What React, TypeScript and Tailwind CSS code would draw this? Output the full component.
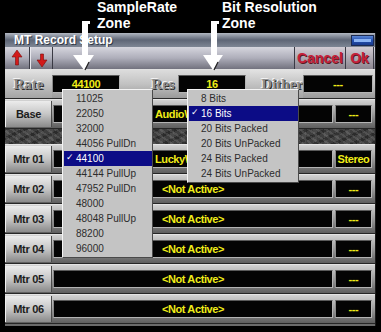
import React from "react";

const rates = [
  "11025",
  "22050",
  "32000",
  "44056 PullDn",
  "44100",
  "44144 PullUp",
  "47952 PullDn",
  "48000",
  "48048 PullUp",
  "88200",
  "96000",
];
const bits = [
  "8 Bits",
  "16 Bits",
  "20 Bits Packed",
  "20 Bits UnPacked",
  "24 Bits Packed",
  "24 Bits UnPacked",
];

function Field({
  children,
  className = "",
}: {
  children?: React.ReactNode;
  className?: string;
}) {
  return (
    <div
      className={`flex items-center justify-center overflow-hidden whitespace-nowrap bg-[#040404] border border-[#b4b4b4] border-t-[#5a5a5a] border-l-[#8a8a8a] text-[#f0ec18] font-bold text-[11px] tracking-[-0.4px] leading-none ${className}`}
    >
      {children}
    </div>
  );
}

function RowButton({ label }: { label: string }) {
  return (
    <div className="my-[1px] flex w-[47px] items-center justify-center border-r border-r-[#4a4a4a] border-l border-l-[#f0f0f0] bg-gradient-to-b from-[#ececec] via-[#c6c6c6] to-[#8a8a8a] text-[11px] font-bold tracking-[-0.3px] text-[#1c1c1c]">
      {label}
    </div>
  );
}

function TrackRow({
  label,
  text,
  right,
  left = false,
}: {
  label: string;
  text: string;
  right: string;
  left?: boolean;
}) {
  return (
    <div className="flex h-[30px] border-t border-t-[#e4e4e4] border-b border-b-[#262626] bg-gradient-to-b from-[#d2d2d2] via-[#9c9c9c] to-[#5e5e5e]">
      <RowButton label={label} />
      <div className="flex flex-1 items-center pl-[1px]">
        <Field
          className={`h-[18px] w-[280px] ${left ? "justify-start pl-[101px]" : ""}`}
        >
          {left ? (
            <span className="inline-block w-[32px] overflow-hidden whitespace-nowrap">{text}</span>
          ) : (
            text
          )}
        </Field>
        <Field className="ml-[2px] h-[18px] w-[37px]">{right}</Field>
      </div>
    </div>
  );
}

function Emboss({ children, className = "" }: { children: React.ReactNode; className?: string }) {
  return (
    <div
      className={`flex items-center font-['Liberation_Serif',serif] text-[15px] font-bold text-[#8e8e8e] [text-shadow:1px_1px_0_#2e2e2e,-1px_-1px_0_#f4f4f4] ${className}`}
    >
      {children}
    </div>
  );
}

function Menu({
  items,
  selected,
  className,
}: {
  items: string[];
  selected: number;
  className: string;
}) {
  return (
    <div
      className={`absolute flex flex-col border border-t-[#f4f4f4] border-l-[#f4f4f4] border-b-[#4a4a4a] border-r-[#4a4a4a] bg-[#c4c4c4] py-[1px] pl-[1px] ${className}`}
    >
      {items.map((it, i) => (
        <div
          key={it}
          className={`relative flex h-[15px] items-center pl-[12px] text-[10px] leading-none ${
            i === selected ? "bg-[#0c0c86] text-white" : "text-[#2c2c2c]"
          }`}
        >
          {i === selected && (
            <span className="absolute left-[2px] top-[2px] font-['DejaVu_Sans',sans-serif] text-[9px] font-bold">
              ✓
            </span>
          )}
          {it}
        </div>
      ))}
    </div>
  );
}

export default function App() {
  return (
    <div className="relative h-[332px] w-[381px] overflow-hidden bg-black font-['Liberation_Sans',Arial,sans-serif]">
      {/* window */}
      <div className="ml-[5px] mt-[33px] flex w-[371px] flex-col border-r border-r-[#1a1a1a] bg-[#8a8a8a]">
        {/* title bar */}
        <div className="flex h-[14px] items-start justify-between bg-gradient-to-b from-[#b2b8c2] via-[#5e6676] to-[#7e8694]">
          <div className="pl-[9px] text-[12px] font-bold leading-[14px] text-white [text-shadow:1px_1px_0_#333a48]">
            MT Record Setup
          </div>
          <div className="mr-[1px] mt-[2px] flex h-[11px] w-[23px] items-center border border-[#1c2a50] bg-gradient-to-b from-[#5b86d6] via-[#2450b0] to-[#1a3a8c] px-[2px]">
            <div className="h-[3px] w-full bg-[#8cb4f4]" />
          </div>
        </div>
        {/* toolbar */}
        <div className="flex h-[23px] border-b border-b-[#e0e0e0] bg-gradient-to-b from-[#d6d6de] via-[#aeaeba] to-[#72727e]">
          <div className="w-[25px] border-r border-r-[#3a3a44]">
            <svg width="25" height="22" viewBox="0 0 25 22">
              <polygon
                points="7,10 12,3 17,10 13.5,10 13.5,18 10.5,18 10.5,10"
                fill="#d21a1a"
                stroke="#7a0c0c"
                strokeWidth="0.6"
              />
            </svg>
          </div>
          <div className="w-[23px] border-r border-r-[#3a3a44] border-l border-l-[#e8e8ee]">
            <svg width="22" height="22" viewBox="0 0 22 22">
              <polygon
                points="9.5,7 12.5,7 12.5,13 16,13 11,20 6,13 9.5,13"
                fill="#d21a1a"
                stroke="#7a0c0c"
                strokeWidth="0.6"
              />
            </svg>
          </div>
          <div className="flex-1" />
          <div className="flex w-[52px] items-center justify-center border-l border-l-[#3a3a44] border-r border-r-[#3a3a44] bg-gradient-to-b from-[#d2ccd4] to-[#8c8690] text-[14px] font-bold text-[#c4203a] [text-shadow:1px_1px_0_#5a1a24]">
            Cancel
          </div>
          <div className="mr-[1px] flex w-[28px] items-center justify-center border-r border-r-[#3a3a44] bg-gradient-to-b from-[#d2ccd4] to-[#8c8690] text-[14px] font-bold text-[#c4203a] [text-shadow:1px_1px_0_#5a1a24]">
            Ok
          </div>
        </div>
        {/* rate row */}
        <div className="flex h-[29px] items-center border-b border-b-[#2a2a2a] bg-gradient-to-b from-[#dcdcdc] via-[#c2c2c2] to-[#9a9a9a]">
          <Emboss className="h-full w-[47px] justify-center bg-gradient-to-b from-[#e2e2e2] to-[#a4a4a4]">
            Rate
          </Emboss>
          <Field className="h-[18px] w-[68px]">44100</Field>
          <Emboss className="ml-[28px] w-[30px] justify-center">Res</Emboss>
          <Field className="h-[18px] w-[68px]">16</Field>
          <Emboss className="ml-[4px] h-full w-[53px] justify-end bg-gradient-to-b from-[#e2e2e2] to-[#a4a4a4]">
            Dither
          </Emboss>
          <Field className="h-[18px] w-[70px]">---</Field>
        </div>
        {/* base row */}
        <TrackRow label="Base" text="AudioWorks\Base" right="---" left />
        {/* textured strip */}
        <div className="h-[15px] bg-[#3e3e3e] [background-image:repeating-linear-gradient(35deg,rgba(255,255,255,0.10)_0px,rgba(255,255,255,0.10)_2px,transparent_2px,transparent_5px),repeating-linear-gradient(-25deg,rgba(0,0,0,0.30)_0px,rgba(0,0,0,0.30)_3px,transparent_3px,transparent_8px),repeating-linear-gradient(90deg,rgba(255,255,255,0.06)_0px,rgba(255,255,255,0.06)_4px,transparent_4px,transparent_11px)]" />
        <TrackRow label="Mtr 01" text="LuckyWorks\Song" right="Stereo" left />
        <TrackRow label="Mtr 02" text="<Not Active>" right="---" />
        <TrackRow label="Mtr 03" text="<Not Active>" right="---" />
        <TrackRow label="Mtr 04" text="<Not Active>" right="---" />
        <TrackRow label="Mtr 05" text="<Not Active>" right="---" />
        <TrackRow label="Mtr 06" text="<Not Active>" right="---" />
        <div className="h-[2px] bg-[#6a6a6a]" />
      </div>

      {/* dropdown menus */}
      <Menu items={rates} selected={4} className="left-[62px] top-[89px] w-[91px]" />
      <Menu items={bits} selected={1} className="left-[187px] top-[89px] w-[112px]" />

      {/* annotations */}
      <div className="absolute left-[97px] top-[-1px] text-[14px] font-bold leading-[16px] text-white">
        <div>SampleRate</div>
        <div>Zone</div>
      </div>
      <div className="absolute left-[222px] top-[-1px] text-[14px] font-bold leading-[16px] text-white">
        <div>Bit Resolution</div>
        <div>Zone</div>
      </div>
      <svg className="absolute left-0 top-0" width="381" height="80" viewBox="0 0 381 80">
        <g fill="#ffffff">
          <rect x="82" y="21" width="8" height="3" />
          <rect x="82" y="21" width="6" height="36" />
          <polygon points="73,55 94,55 84,70" />
          <rect x="211" y="21" width="8" height="3" />
          <rect x="211" y="21" width="6" height="36" />
          <polygon points="203,55 223,55 213,70" />
        </g>
        <g stroke="#222" strokeWidth="1.2">
          <line x1="89" y1="62" x2="85" y2="70" />
          <line x1="218" y1="62" x2="214" y2="70" />
        </g>
      </svg>
    </div>
  );
}
